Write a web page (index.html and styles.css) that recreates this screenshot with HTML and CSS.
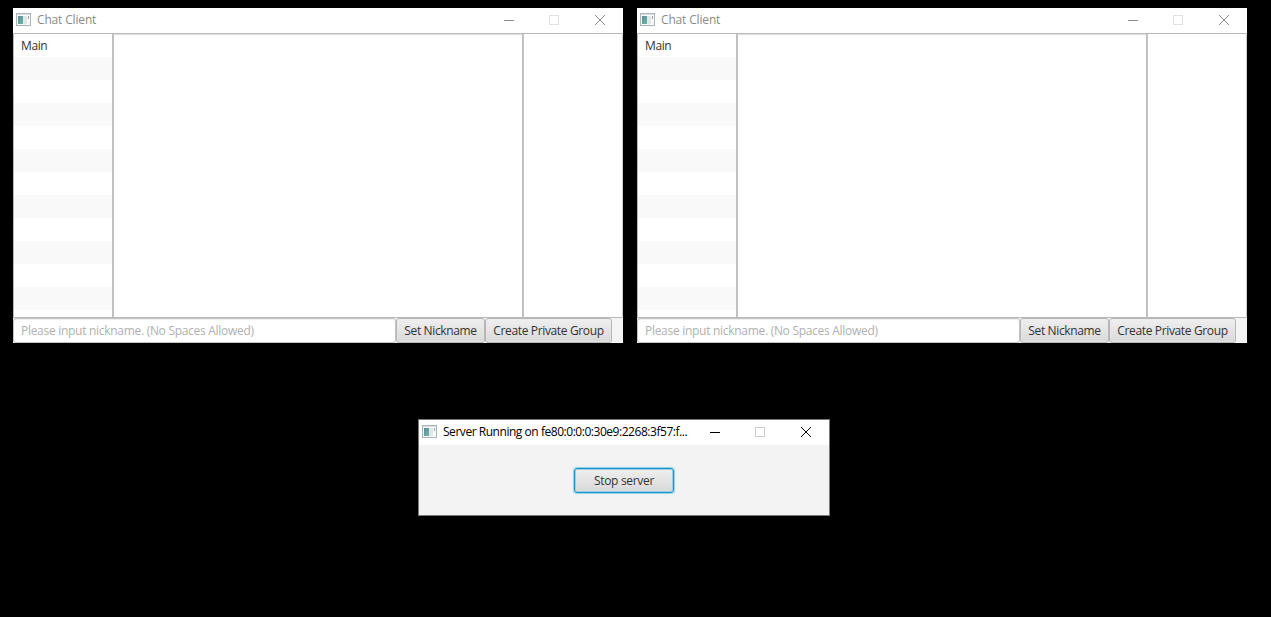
FILE: index.html
```
<!DOCTYPE html>
<html lang="en">
<head>
<meta charset="utf-8">
<title>Chat Client</title>
<link rel="stylesheet" href="styles.css">
</head>
<body>
<svg class="defs" width="0" height="0">
  <defs>
    <linearGradient id="pane" x1="0" y1="0" x2="1" y2="1"><stop offset="0" stop-color="#477f91"/><stop offset="1" stop-color="#62b193"/></linearGradient>
    <symbol id="app" viewBox="0 0 15 13">
      <rect x=".5" y=".5" width="14" height="12" fill="#f7f8fa" stroke="#a5acb0"/>
      <rect x="1" y="1" width="13" height="1" fill="#d7dce2"/>
      <rect x="2" y="3" width="5" height="8" fill="url(#pane)"/>
      <rect x="7" y="3" width="4" height="8" fill="#dfe5eb"/>
      <rect x="12" y="3" width="1" height="3" fill="#8d9dac"/>
    </symbol>
    <symbol id="controls" viewBox="0 0 102 12">
      <path d="M0 6.5h10" fill="none" stroke="currentColor"/>
      <rect class="maximize" x="45.500" y="1.500" width="9" height="9"/>
      <path d="M91 1l10 10M101 1L91 11" fill="none" stroke="currentColor"/>
    </symbol>
  </defs>
</svg>
<main class="desktop">
  <div class="clients">
    <section class="window client">
      <header class="titlebar"><svg class="app-icon"><use href="#app"/></svg><span class="title">Chat Client</span><svg class="controls"><use href="#controls"/></svg></header>
      <div class="panes"><div class="rooms"><div class="room">Main</div></div><div class="messages"></div><div class="users"></div></div>
      <footer class="toolbar"><div class="field"><span class="prompt">Please input nickname. (No Spaces Allowed)</span></div><button class="button nick"><span>Set Nickname</span></button><button class="button group"><span>Create Private Group</span></button></footer>
    </section>
    <section class="window client">
      <header class="titlebar"><svg class="app-icon"><use href="#app"/></svg><span class="title">Chat Client</span><svg class="controls"><use href="#controls"/></svg></header>
      <div class="panes"><div class="rooms"><div class="room">Main</div></div><div class="messages"></div><div class="users"></div></div>
      <footer class="toolbar"><div class="field"><span class="prompt">Please input nickname. (No Spaces Allowed)</span></div><button class="button nick"><span>Set Nickname</span></button><button class="button group"><span>Create Private Group</span></button></footer>
    </section>
  </div>
  <section class="window server">
    <header class="titlebar"><svg class="app-icon"><use href="#app"/></svg><span class="title">Server Running on fe80:0:0:0:30e9:2268:3f57:f...</span><svg class="controls"><use href="#controls"/></svg></header>
    <div class="server-body"><button class="button stop"><span>Stop server</span></button></div>
  </section>
</main>
</body>
</html>
```
FILE: styles.css
```
* { box-sizing: border-box; }
body { margin: 0; background: #000; font: 12px/16px "Open Sans", "Noto Sans", sans-serif; color: #333; }
.defs { position: absolute; }
.desktop { width: 1271px; height: 617px; padding-top: 8px; overflow: hidden; }
.clients { display: flex; gap: 14px; padding-left: 13px; }
.window { background: #fff; white-space: nowrap; --maximize: #e2e2e2; }
.client { width: 610px; height: 335px; display: flex; flex-direction: column; }
.titlebar { height: 25px; flex: none; display: flex; align-items: center; padding: 0 17px 1px 3px; color: #8b8b8b; }
.title { letter-spacing: -.16px; }
.app-icon { width: 15px; height: 13px; margin: 0 6px 1px 0; opacity: .9; }
.controls { width: 102px; height: 12px; flex: none; margin-left: auto; }
.maximize { fill: none; stroke: var(--maximize); }
.panes { height: 285px; display: flex; border: 1px solid #b9b9b9; border-right-color: #ccc; }
.rooms { width: 98px; background: repeating-linear-gradient(#fff 0 23px, #f9f9f9 23px 46px); }
.room { height: 23px; padding: 4px 7px; letter-spacing: -.4px; }
.messages { width: 412px; border: solid #c1c1c1; border-width: 0 2px; box-shadow: inset 0 2px 1px -1px #ddd; }
.users { flex: 1; }
.toolbar { height: 25px; display: flex; background: #f4f4f4; }
.field { width: 383px; border: 1px solid #c4c4c4; border-radius: 3px; background: #fff; padding: 4px 7px; color: #b0b0b0; box-shadow: inset 0 1px 1px #eee; letter-spacing: -.29px; }
.button { border: 1px solid #b5b5b5; border-radius: 3px; padding: 0; font: inherit; letter-spacing: -.36px; color: #333; background: linear-gradient(#efefef, #d9d9d9); box-shadow: inset 0 0 0 1px #ededed66; display: flex; justify-content: center; align-items: center; }
.nick { width: 89px; }
.group { width: 127px; }
.server { --maximize: #ccc; width: 412px; height: 97px; margin: 76px 0 0 418px; border: 1px solid #777; }
.server .titlebar { color: #000; }
.server .title { letter-spacing: -.46px; }
.server-body { height: 70px; background: #f3f3f3; display: flex; justify-content: center; padding-top: 23px; }
.stop { width: 100px; height: 25px; border-color: #1b93c8; box-shadow: 0 0 1px 1px #8fd2ee, inset 0 0 0 1px #9ccfe4; letter-spacing: -.32px; }
```
